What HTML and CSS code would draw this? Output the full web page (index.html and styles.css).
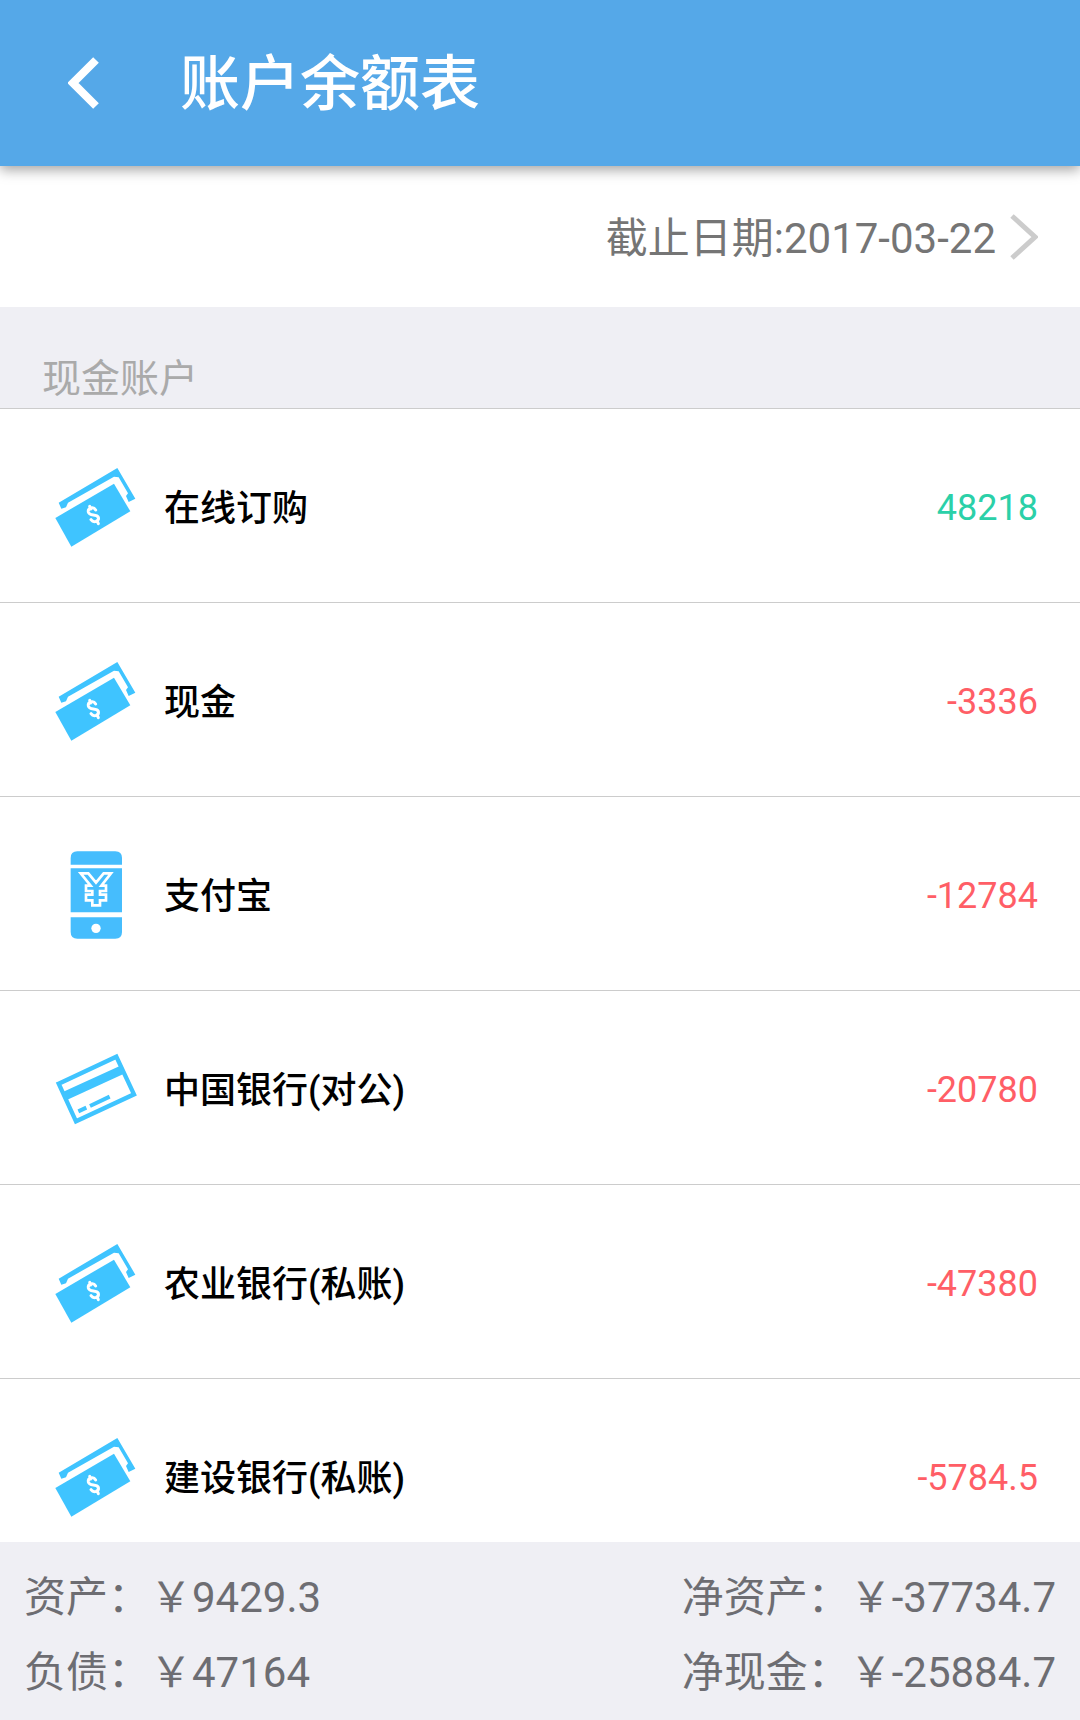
FILE: index.html
```html
<!DOCTYPE html>
<html lang="zh-CN">
<head>
    <meta charset="UTF-8">
    <meta name="viewport" content="width=device-width, initial-scale=1.0">
    <title>账户余额表</title>
    <link rel="stylesheet" href="styles.css">
</head>
<body>
    <!-- shared icons -->
    <svg class="sprite" aria-hidden="true">
        <symbol id="icon-cash" viewBox="30 33 270 270">
            <path fill="#3fc4ff" d="M56 158 L232 54 L286 146 L266 156 L258 138 L264 130 L236 82 L222 80 L84 158 L78 172 L64 176 Z"/>
            <path fill="#3fc4ff" d="M46 204 L222 101 L271 184 L94 290 Z"/>
            <path fill="none" stroke="#fff" stroke-width="9" stroke-linecap="round" d="M167 180 C160 168 143 174 145 186 C148 200 170 190 175 202 C178 214 161 220 153 209 M149 169 L152 177 M171 212 L175 221"/>
        </symbol>
        <symbol id="icon-phone" viewBox="30 27 270 270">
            <path fill="#46bdfd" d="M92 74 V54 Q92 34 112 34 H226 Q246 34 246 54 V74 Z"/>
            <path fill="#46bdfd" d="M92 85 H246 V217 H92 Z"/>
            <path fill="#46bdfd" d="M92 232 H246 V276 Q246 296 226 296 H112 Q92 296 92 276 Z"/>
            <circle cx="168" cy="265" r="14" fill="#fff"/>
            <path fill="none" stroke="#fff" stroke-width="8" d="M122 100 H145 L168 128 L191 100 H213 L184 137 H198 V153 H180 V164 H198 V181 H180 V196 H157 V181 H138 V164 H157 V153 H138 V137 H152 Z"/>
        </symbol>
        <symbol id="icon-card" viewBox="30 23 270 270">
            <path fill="none" stroke="#3fc4ff" stroke-width="13" d="M56 145 L229 64 L282 177 L108 258 Z"/>
            <path fill="#3fc4ff" d="M70 169 L241 91 L252 115 L82 193 Z"/>
            <path fill="none" stroke="#3fc4ff" stroke-width="12" d="M115 228 L139 217 M150 212 L209 184"/>
        </symbol>
    </svg>

    <header class="topbar">
        <button class="back-btn" type="button" aria-label="返回">
            <svg viewBox="0 0 32 52" width="32" height="52"><path d="M28 3 L5 26 L28 49" fill="none" stroke="#fff" stroke-width="8"/></svg>
        </button>
        <h1>账户余额表</h1>
    </header>

    <a class="date-row" href="#">
        <span>截止日期:2017-03-22</span>
        <svg viewBox="0 0 28 46" width="28" height="46"><path d="M2 2 L25 23 L2 44" fill="none" stroke="#ccc" stroke-width="5"/></svg>
    </a>

    <main class="accounts">
        <h2>现金账户</h2>
        <ul>
            <li>
                <svg class="icon"><use href="#icon-cash"/></svg>
                <span class="name">在线订购</span>
                <span class="amount plus">48218</span>
            </li>
            <li>
                <svg class="icon"><use href="#icon-cash"/></svg>
                <span class="name">现金</span>
                <span class="amount">-3336</span>
            </li>
            <li>
                <svg class="icon"><use href="#icon-phone"/></svg>
                <span class="name">支付宝</span>
                <span class="amount">-12784</span>
            </li>
            <li>
                <svg class="icon"><use href="#icon-card"/></svg>
                <span class="name">中国银行(对公)</span>
                <span class="amount">-20780</span>
            </li>
            <li>
                <svg class="icon"><use href="#icon-cash"/></svg>
                <span class="name">农业银行(私账)</span>
                <span class="amount">-47380</span>
            </li>
            <li>
                <svg class="icon"><use href="#icon-cash"/></svg>
                <span class="name">建设银行(私账)</span>
                <span class="amount">-5784.5</span>
            </li>
        </ul>
    </main>

    <footer class="summary">
        <div>
            <p>资产：￥9429.3</p>
            <p>负债：￥47164</p>
        </div>
        <div>
            <p>净资产：￥-37734.7</p>
            <p>净现金：￥-25884.7</p>
        </div>
    </footer>
</body>
</html>
```
FILE: styles.css
```css
* {
    box-sizing: border-box;
    margin: 0;
    padding: 0;
}

body {
    height: 100vh;
    display: flex;
    flex-direction: column;
    font-family: Roboto, "Noto Sans CJK SC", sans-serif;
    background: #fff;
    color: #000;
}

.sprite {
    position: absolute;
    width: 0;
    height: 0;
}

/* top bar */
.topbar {
    flex: none;
    display: flex;
    align-items: center;
    gap: 80px;
    height: 166px;
    padding: 0 68px;
    background: #55a8e8;
    color: #fff;
    box-shadow: 0 4px 12px rgba(0, 0, 0, 0.36);
    position: relative;
}

.topbar h1 {
    padding-top: 4px;
    font-size: 60px;
    font-weight: 500;
    line-height: 80px;
}

.back-btn {
    display: flex;
    border: none;
    background: none;
    cursor: pointer;
}

.date-row {
    flex: none;
    display: flex;
    align-items: center;
    justify-content: flex-end;
    gap: 14px;
    height: 141px;
    padding: 0 42px;
    font-size: 42px;
    color: #757575;
    text-decoration: none;
}

.date-row span {
    padding-bottom: 4px;
}

/* account list */
.accounts {
    flex: 1;
    min-height: 0;
    overflow-y: auto;
    scrollbar-width: none;
}

.accounts h2 {
    padding: 46px 42px 3px;
    font-size: 39px;
    font-weight: 400;
    line-height: 52px;
    background: #efeff4;
    color: #aaa;
}

.accounts ul {
    list-style: none;
}

.accounts li {
    display: flex;
    align-items: center;
    gap: 24px;
    height: 194px;
    padding: 0 42px 0 50px;
    border-top: 1px solid #ccc;
    font-size: 36px;
    line-height: 48px;
}

.icon {
    flex: none;
    width: 90px;
    height: 90px;
}

.name {
    flex: 1;
    padding-top: 7px;
    font-weight: 500;
}

.amount {
    padding-top: 4px;
    color: #ff5e66;
}

.plus {
    color: #2bd0a8;
}

/* totals */
.summary {
    flex: none;
    display: flex;
    justify-content: space-between;
    padding: 18px 24px 10px;
    background: #efeff4;
    color: #6d6d72;
    font-size: 42px;
    line-height: 75px;
}
```
